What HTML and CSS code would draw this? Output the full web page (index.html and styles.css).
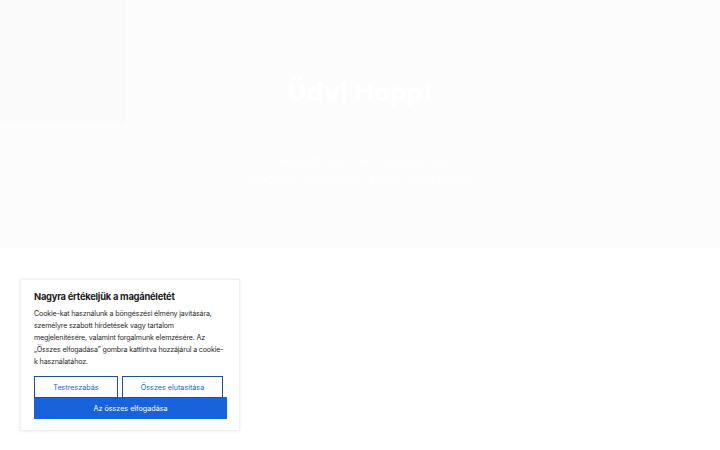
FILE: index.html
```html
<!DOCTYPE html>
<html lang="hu">
<head>
<meta charset="utf-8">
<title>Hoppá</title>
<link rel="stylesheet" href="styles.css">
</head>
<body>
<header class="hero">
  <div class="corner"></div>
  <div class="hero-inner">
    <h1 class="hero-title">Üdv! Hopp!</h1>
    <p class="hero-text">A keresett oldal nem található vagy<br>időközben áthelyezték, kérjük térjen vissza.</p>
  </div>
</header>
<main class="content"></main>
<div class="cookie">
  <h2 class="cookie-title">Nagyra értékeljük a magánéletét</h2>
  <p class="cookie-text">Cookie-kat használunk a böngészési élmény javítására, személyre szabott hirdetések vagy tartalom megjelenítésére, valamint forgalmunk elemzésére. Az „Összes elfogadása” gombra kattintva hozzájárul a cookie-k használatához.</p>
  <div class="cookie-row">
    <button class="btn btn-outline btn-a">Testreszabás</button>
    <button class="btn btn-outline btn-b">Összes elutasítása</button>
  </div>
  <button class="btn btn-primary">Az összes elfogadása</button>
</div>
</body>
</html>
```
FILE: styles.css
```css
* { box-sizing: border-box; }
html, body { margin: 0; padding: 0; }
body {
  width: 720px;
  height: 450px;
  overflow: hidden;
  background: #ffffff;
  font-family: Inter, "Noto Sans", sans-serif;
  position: relative;
}
.hero {
  height: 248px;
  background: #fcfcfc;
  position: relative;
  display: flex;
  justify-content: center;
}
.corner {
  position: absolute;
  left: 0;
  top: 0;
  width: 125px;
  height: 125px;
  background: #fafafa;
}
.hero-inner {
  text-align: center;
  padding-top: 76px;
  position: relative;
}
.hero-title {
  margin: 0;
  font-size: 26px;
  font-weight: 800;
  color: #ffffff;
  line-height: 32px;
}
.hero-text {
  margin: 46px 0 0;
  font-size: 11px;
  line-height: 17px;
  color: #ffffff;
}
.cookie {
  position: absolute;
  left: 20px;
  top: 279px;
  width: 220px;
  height: 152px;
  background: #ffffff;
  border: 1px solid #f1f1f1;
  box-shadow: 0 0 4px rgba(0,0,0,0.08);
  padding: 10px 13px 0 13px;
}
.cookie-title {
  margin: 0;
  font-size: 9.4px;
  font-weight: 700;
  color: #212121;
  line-height: 14px;
  letter-spacing: -0.25px;
}
.cookie-text {
  margin: 4px 0 0;
  font-size: 7.1px;
  line-height: 12px;
  color: #2a2a2a;
  letter-spacing: -0.15px;
}
.cookie-row {
  display: flex;
  gap: 4px;
  margin-top: 8px;
}
.btn {
  font-family: inherit;
  font-size: 7.2px;
  height: 22px;
  padding: 0;
  cursor: pointer;
}
.btn-outline {
  background: #ffffff;
  color: #1863dc;
  border: 1.5px solid #1c4f9c;
}
.btn-a { width: 84px; }
.btn-b { width: 101px; }
.btn-primary {
  display: block;
  width: 193px;
  margin-top: -1px;
  background: #1863dc;
  color: #ffffff;
  border: 1px solid #1863dc;
}
```
